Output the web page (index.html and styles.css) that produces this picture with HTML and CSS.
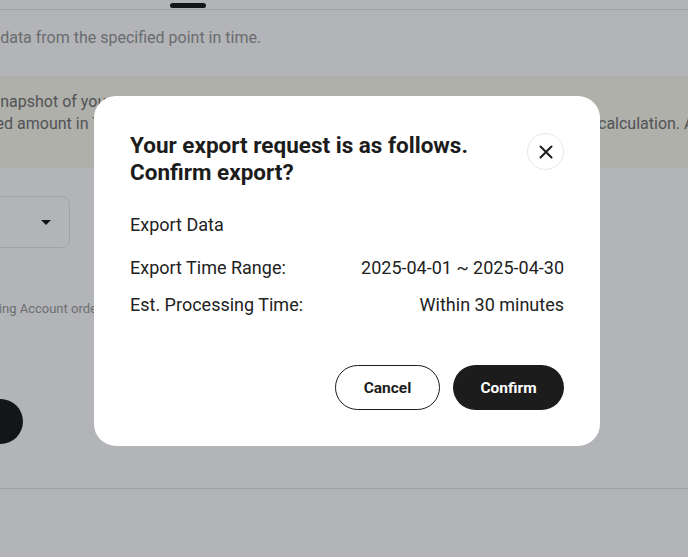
FILE: index.html
```html
<!DOCTYPE html>
<html lang="en">
<head>
    <meta charset="UTF-8">
    <meta name="viewport" content="width=device-width, initial-scale=1.0">
    <title>Export Data</title>
    <link rel="stylesheet" href="styles.css">
</head>
<body>

    <div class="page">
        <div class="tabs">
            <span class="tab-indicator"></span>
        </div>

        <p class="intro">Export data from the specified point in time.</p>

        <div class="notice">
            <p class="notice-line first">snapshot of your</p>
            <p class="notice-line split">
                <span class="seg-left">Displayed amount in TWD is for reference only and may differ</span>
                <span class="seg-right">calculation. Actual values may vary.</span>
            </p>
        </div>

        <div class="select-box">
            <span class="select-value">April 2025</span>
            <span class="caret"></span>
        </div>

        <p class="hint">Trading Account orders</p>

        <div class="round-btn"></div>

        <div class="divider"></div>
    </div>

    <div class="overlay">
        <div class="modal">
            <div class="modal-head">
                <h2>Your export request is as follows. Confirm export?</h2>
                <button class="close-btn" aria-label="Close">
                    <svg width="14" height="14" viewBox="0 0 14 14">
                        <path d="M1.5 1.5 L12.5 12.5 M12.5 1.5 L1.5 12.5" stroke="#1c1c1c" stroke-width="2" stroke-linecap="round"/>
                    </svg>
                </button>
            </div>

            <p class="export-type">Export Data</p>

            <div class="row">
                <span>Export Time Range:</span>
                <span>2025-04-01 ~ 2025-04-30</span>
            </div>
            <div class="row">
                <span>Est. Processing Time:</span>
                <span>Within 30 minutes</span>
            </div>

            <div class="actions">
                <button class="btn btn-outline">Cancel</button>
                <button class="btn btn-dark">Confirm</button>
            </div>
        </div>
    </div>

</body>
</html>
```

FILE: styles.css
```css
body {
    margin: 0;
    font-family: Roboto, "Liberation Sans", Arial, sans-serif;
    background-color: #fff;
    overflow: hidden;
}

.page {
    height: 557px;
    overflow: hidden;
}

.tabs {
    height: 6px;
    padding: 3px 0 0 170px;
    border-bottom: 1px solid #e2e2e4;
}

.tab-indicator {
    display: block;
    width: 36px;
    height: 5px;
    border-radius: 3px;
    background-color: #1c1c1c;
}

.intro {
    margin: 18px 0 0 -50px;
    font-size: 16px;
    line-height: 20px;
    color: #999;
    white-space: nowrap;
}

.notice {
    margin-top: 28px;
    height: 92px;
    padding-top: 15px;
    box-sizing: border-box;
    background-color: #fbf9ed;
}

.notice-line {
    margin: 0;
    font-size: 16px;
    line-height: 22px;
    color: #757575;
    white-space: nowrap;
}

.first {
    margin-left: -8px;
}

.split {
    display: flex;
    margin-left: -56px;
}

.seg-left {
    width: 654px;
    flex-shrink: 0;
    overflow: hidden;
}

.select-box {
    margin: 28px 0 0 -40px;
    width: 110px;
    height: 52px;
    border: 1px solid #e6e6e8;
    border-radius: 8px;
    display: flex;
    align-items: center;
    justify-content: space-between;
    padding: 0 18px 0 16px;
    box-sizing: border-box;
    font-size: 14px;
    color: #333;
}

.select-value {
    visibility: hidden;
}

.caret {
    width: 0;
    height: 0;
    border-left: 5px solid transparent;
    border-right: 5px solid transparent;
    border-top: 5px solid #1c1c1c;
}

.hint {
    margin: 53px 0 0 -27px;
    font-size: 13px;
    line-height: 16px;
    color: #9c9c9c;
    white-space: nowrap;
}

.round-btn {
    margin: 82px 0 0 -22px;
    width: 45px;
    height: 45px;
    border-radius: 50%;
    background-color: #1c1c1c;
}

.divider {
    margin-top: 44px;
    border-top: 1px solid #e2e2e4;
}

.overlay {
    position: fixed;
    inset: 0;
    background-color: rgba(0, 5, 18, 0.3);
    display: flex;
    justify-content: center;
    align-items: flex-start;
    padding: 96px 0 0 6px;
}

.modal {
    width: 506px;
    box-sizing: border-box;
    padding: 36px;
    background-color: #fff;
    border-radius: 22px;
    color: #222;
}

.modal-head {
    display: flex;
    justify-content: space-between;
    align-items: flex-start;
}

.modal-head h2 {
    margin: 0;
    width: 370px;
    font-size: 22.5px;
    line-height: 27px;
    font-weight: 700;
    color: #1c1c1c;
}

.close-btn {
    width: 37px;
    height: 37px;
    margin-top: 1px;
    border: 1px solid #e8e8e8;
    border-radius: 50%;
    background-color: #fff;
    display: flex;
    align-items: center;
    justify-content: center;
    padding: 0;
    cursor: pointer;
}

.export-type {
    margin: 28px 0 0 0;
    font-size: 18px;
    line-height: 22px;
}

.row {
    display: flex;
    justify-content: space-between;
    margin-top: 21px;
    font-size: 18px;
    line-height: 22px;
}

.row + .row {
    margin-top: 15px;
}

.actions {
    display: flex;
    justify-content: flex-end;
    gap: 13px;
    margin-top: 49px;
}

.btn {
    height: 45px;
    border-radius: 23px;
    font-family: Roboto, "Liberation Sans", Arial, sans-serif;
    font-size: 15.5px;
    font-weight: 700;
    cursor: pointer;
}

.btn-outline {
    width: 105px;
    background-color: #fff;
    border: 1px solid #1c1c1c;
    color: #1c1c1c;
}

.btn-dark {
    width: 111px;
    background-color: #1c1c1c;
    border: none;
    color: #fff;
}
```
